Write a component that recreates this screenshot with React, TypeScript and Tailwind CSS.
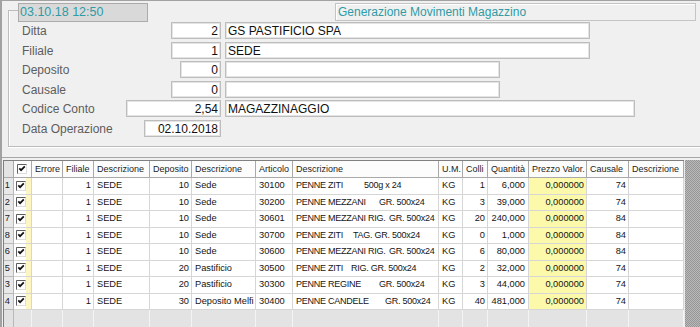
import React from 'react';

type Row = {
  n: number;
  dep: number;
  depDesc: string;
  art: string;
  a: string;
  b: string;
  bw: string;
  colli: number;
  q: string;
  c: number;
};

const rows: Row[] = [
  { n: 1, dep: 10, depDesc: 'Sede', art: '30100', a: 'PENNE ZITI', b: '500g x 24', bw: 'w-[68px]', colli: 1, q: '6,000', c: 74 },
  { n: 2, dep: 10, depDesc: 'Sede', art: '30200', a: 'PENNE MEZZANI', b: 'GR. 500x24', bw: 'w-[83px]', colli: 3, q: '39,000', c: 74 },
  { n: 7, dep: 10, depDesc: 'Sede', art: '30601', a: 'PENNE MEZZANI RIG.', b: 'GR. 500x24', bw: 'w-[93px]', colli: 20, q: '240,000', c: 84 },
  { n: 8, dep: 10, depDesc: 'Sede', art: '30700', a: 'PENNE ZITI', b: 'TAG. GR. 500x24', bw: 'w-[57px]', colli: 0, q: '1,000', c: 84 },
  { n: 6, dep: 10, depDesc: 'Sede', art: '30600', a: 'PENNE MEZZANI RIG.', b: 'GR. 500x24', bw: 'w-[93px]', colli: 6, q: '80,000', c: 84 },
  { n: 5, dep: 20, depDesc: 'Pastificio', art: '30500', a: 'PENNE ZITI', b: 'RIG. GR. 500x24', bw: 'w-[55px]', colli: 2, q: '32,000', c: 74 },
  { n: 3, dep: 20, depDesc: 'Pastificio', art: '30300', a: 'PENNE REGINE', b: 'GR. 500x24', bw: 'w-[83px]', colli: 3, q: '44,000', c: 74 },
  { n: 4, dep: 30, depDesc: 'Deposito Melfi', art: '30400', a: 'PENNE CANDELE', b: 'GR. 500x24', bw: 'w-[89px]', colli: 40, q: '481,000', c: 74 },
];

const cols =
  'grid grid-cols-[10px_18px_31px_31px_56px_42px_64px_37px_146px_24px_25px_41px_58px_42px_55px]';

function Check() {
  return (
    <svg width="10" height="10" viewBox="0 0 10 10" className="shrink-0">
      <rect x="0.5" y="0.5" width="9" height="9" fill="#ffffff" stroke="#dcdcdc" />
      <path d="M0.5 9.5V0.5H9.5" stroke="#5e5e5e" fill="none" />
      <path d="M2.3 4.3L4.1 6.2L7.8 2.4" stroke="#111111" strokeWidth="1.7" fill="none" />
    </svg>
  );
}

type FieldProps = {
  label: string;
  code: string;
  codeW: string;
  desc?: string;
  descW?: string;
  mt: string;
};

function Field({ label, code, codeW, desc, descW, mt }: FieldProps) {
  const box =
    'h-[17px] bg-white border border-[#bdbdbd] shadow-[inset_0_0_0_1px_#e4e4e4] flex items-center text-[#111] whitespace-nowrap overflow-hidden';
  return (
    <div className={`flex items-center h-[17px] ${mt}`}>
      <div className="w-[212px] flex items-center">
        <span className="flex-1 pl-[13px] text-[#5d5d5d]">{label}</span>
        <div className={`${box} ${codeW} justify-end pr-[2px]`}>{code}</div>
      </div>
      {descW ? <div className={`${box} ${descW} ml-[4px] pl-[2px]`}>{desc}</div> : null}
    </div>
  );
}

export default function App() {
  const hcell =
    'h-[17px] border-r border-b border-[#a9a9a9] bg-[#fcfcfc] flex items-center pl-[3px] whitespace-nowrap overflow-hidden text-[#1c1c1c]';
  const base =
    'border-r border-b border-[#d6d6d6] flex items-center whitespace-nowrap overflow-hidden text-[#151515]';
  const cell = `${base} bg-white`;
  const right = 'justify-end pr-[2px]';
  const left = 'pl-[3px]';
  const headers = [
    'Errore',
    'Filiale',
    'Descrizione',
    'Deposito',
    'Descrizione',
    'Articolo',
    'Descrizione',
    'U.M.',
    'Colli',
    'Quantità',
    'Prezzo Valor.',
    'Causale',
    'Descrizione',
  ];
  return (
    <div className="w-[700px] h-[327px] overflow-hidden bg-[#f0f0f0] border-l-2 border-t border-[#a2a2a2] flex flex-col font-['Liberation_Sans',Arial,sans-serif] leading-none">
      {/* group box */}
      <div className="mt-[9px] ml-[6px] w-[720px] shrink-0 border-l border-b border-[#bcbcbc] shadow-[inset_1px_0_0_#ffffff,0_1px_0_#ffffff] pb-[9px] text-[12px]">
        <div className="-mt-[7px] flex items-start">
          <div className="w-[9px] mt-[7px] border-t border-[#bcbcbc]" />
          <div className="w-[130px] h-[19px] bg-[#d9d9d9] border border-[#ababab] flex items-center pl-[1px] text-[12.5px] text-[#2f9ba6]">
            03.10.18 12:50
          </div>
          <div className="ml-[187px] w-[361px] h-[18px] bg-[#f0f0f0] border border-[#c4c4c4] shadow-[inset_1px_1px_0_#ffffff] flex items-center pl-[2px] text-[#2f9ba6]">
            Generazione Movimenti Magazzino
          </div>
        </div>
        <Field label="Ditta" code="2" codeW="w-[50px]" desc="GS PASTIFICIO SPA" descW="w-[365px]" mt="mt-0" />
        <Field label="Filiale" code="1" codeW="w-[50px]" desc="SEDE" descW="w-[365px]" mt="mt-[3px]" />
        <Field label="Deposito" code="0" codeW="w-[41px]" desc="" descW="w-[275px]" mt="mt-[2px]" />
        <Field label="Causale" code="0" codeW="w-[50px]" desc="" descW="w-[275px]" mt="mt-[3px]" />
        <Field label="Codice Conto" code="2,54" codeW="w-[95px]" desc="MAGAZZINAGGIO" descW="w-[410px]" mt="mt-[2px]" />
        <Field label="Data Operazione" code="02.10.2018" codeW="w-[77px]" mt="mt-[3px]" />
      </div>

      <div className="mt-[10px] h-px shrink-0 bg-[#a6a6a6]" />

      {/* table */}
      <div className="mt-[2px] flex flex-1 min-h-0 text-[9.25px]">
        <div className="ml-px w-[681px] border-l border-t border-[#808080] flex flex-col">
          <div className={`${cols} text-[9px]`}>
            <div className="h-[17px] border-r border-b border-[#a9a9a9] bg-[#e4e4e4]" />
            <div className={`${hcell} pl-[2px]`}>
              <Check />
            </div>
            {headers.map((h, i) => (
              <div key={i} className={hcell}>
                {h}
              </div>
            ))}
          </div>
          {rows.map((r) => (
            <div key={r.n} className={`${cols} h-[16.5px]`}>
              <div className="border-r border-b border-[#b9b9b9] bg-[#e8e8e8] flex items-center justify-end pr-[3px] text-[#1c1c1c]">
                {r.n}
              </div>
              <div className={`${cell} pl-[2px]`}>
                <Check />
                <div className="ml-auto w-[5px] self-stretch bg-[#fdf6c2]" />
              </div>
              <div className={cell} />
              <div className={`${cell} ${right}`}>1</div>
              <div className={`${cell} ${left}`}>SEDE</div>
              <div className={`${cell} ${right}`}>{r.dep}</div>
              <div className={`${cell} ${left}`}>{r.depDesc}</div>
              <div className={`${cell} ${left}`}>{r.art}</div>
              <div className={`${cell} ${left} text-[9px] tracking-[-0.25px]`}>
                <span className={`${r.bw} shrink-0 overflow-hidden`}>{r.a}</span>
                <span>{r.b}</span>
              </div>
              <div className={`${cell} ${left}`}>KG</div>
              <div className={`${cell} ${right}`}>{r.colli}</div>
              <div className={`${cell} justify-end pr-[3px]`}>{r.q}</div>
              <div className={`${base} ${right} bg-[#fcf9aa]`}>0,000000</div>
              <div className={`${cell} ${right}`}>{r.c}</div>
              <div className={cell} />
            </div>
          ))}
          <div className={`${cols} flex-1`}>
            <div className="border-r border-[#b9b9b9] bg-[#e2e2e2]" />
            {Array.from({ length: 14 }).map((_, i) => (
              <div key={i} className="border-r border-[#f4f4f4] bg-[#e3e3e3]" />
            ))}
          </div>
        </div>
        <div className="flex-1 border-l border-[#ececec] bg-[repeating-conic-gradient(#969696_0%_25%,#b9b9b9_0%_50%)] bg-size-[2px_2px]" />
      </div>
    </div>
  );
}
